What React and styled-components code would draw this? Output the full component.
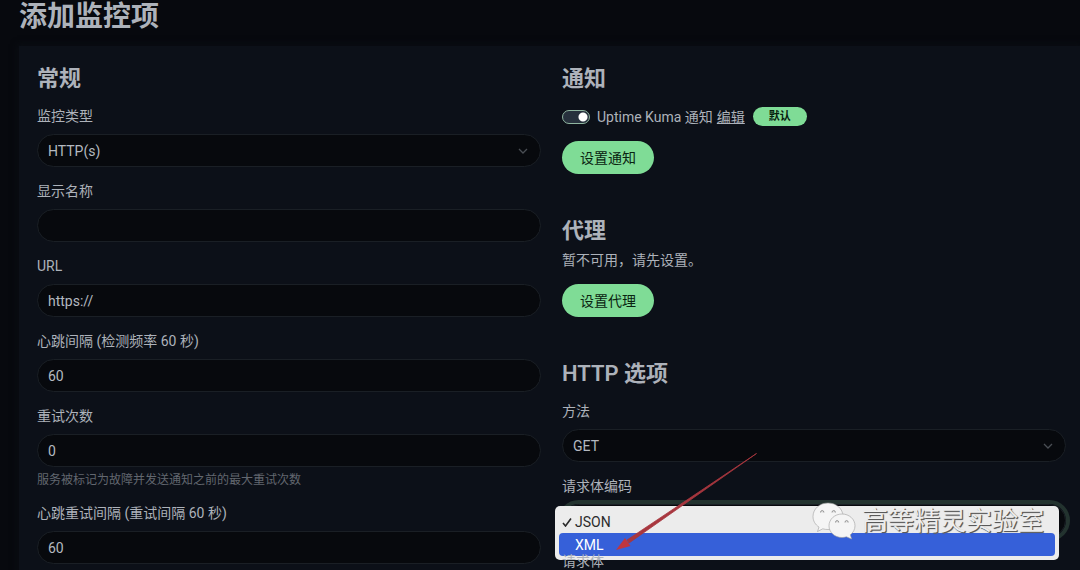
import React from "react";
import styled, { createGlobalStyle } from "styled-components";

const GlobalStyle = createGlobalStyle`
  * { box-sizing: border-box; }
  html { scrollbar-width: none; background: #07090e; }
  body {
    margin: 0;
    background: #07090e;
    color: #adb2ba;
    font-family: Roboto, "Noto Sans CJK SC", sans-serif;
    font-size: 14px;
    line-height: 20px;
  }
  input, select, button { font: inherit; }
`;

const Page = styled.main`
  min-height: 100vh;
  padding-left: 19px;
`;

const PageTitle = styled.h1`
  margin: 0 0 12px;
  font-size: 28px;
  line-height: 34px;
  font-weight: 600;
`;

const Card = styled.form`
  display: grid;
  grid-template-columns: 1fr 1fr;
  gap: 21px;
  padding: 18px 14px 18px 18px;
  background: #0c1018;
  box-shadow: 0 0 6px 2px #0a0d13;
`;

const Column = styled.div`
  min-width: 0;
`;

const Section = styled.section`
  margin-bottom: 42px;
`;

const SectionTitle = styled.h2`
  margin: 0 0 ${(p) => (p.$tight ? 4 : 12)}px;
  font-size: 22px;
  line-height: 30px;
  font-weight: 600;
`;

const Field = styled.div`
  position: relative;
  margin-bottom: 14px;
`;

const Label = styled.label`
  display: block;
  margin-bottom: 8px;
`;

const Input = styled.input`
  display: block;
  width: 100%;
  height: 33px;
  padding: 0 10px;
  border: 1px solid #1a1f25;
  border-radius: 17px;
  background: #07090d;
  color: #b4b9c0;
  outline: none;
`;

const SelectWrap = styled.div`
  display: grid;
  align-items: center;
  border-radius: 17px;
  box-shadow: ${(p) => (p.$focused ? "0 0 0 4px #23332f" : "none")};
  > * { grid-area: 1 / 1; }
`;

const Select = styled(Input).attrs({ as: "select" })`
  appearance: none;
`;

const Chevron = styled.svg`
  justify-self: end;
  margin-right: 12px;
  pointer-events: none;
`;

const Help = styled.p`
  margin: 5px 0 0;
  font-size: 12px;
  line-height: 17px;
  color: #62676f;
`;

const Note = styled.p`
  margin: 0 0 14px;
`;

const ToggleRow = styled.div`
  display: flex;
  align-items: center;
  height: 21px;
  margin-bottom: 14px;
`;

const Toggle = styled.input`
  appearance: none;
  width: 28px;
  height: 14px;
  margin: 0 7px 0 0;
  border: 1px solid #8fb5a0;
  border-radius: 7px;
  background: radial-gradient(circle at 20px 6px, #fff 4px, #27313d 5px);
`;

const EditLink = styled.a`
  margin: 0 8px 0 4px;
  color: inherit;
  text-decoration: underline;
`;

const Badge = styled.span`
  padding: 1px 16px 0;
  border-radius: 10px;
  background: #7fdc96;
  color: #06200d;
  font-size: 11px;
  line-height: 18px;
  font-weight: 700;
`;

const PillButton = styled.button`
  height: 33px;
  padding: 0 18px;
  border: 0;
  border-radius: 17px;
  background: #7fdc96;
  color: #0a2411;
`;

const Menu = styled.div`
  position: absolute;
  top: 30px;
  left: -7px;
  right: 7px;
  padding: 4px;
  border-radius: 5px;
  background: #ececec;
`;

const MenuItem = styled.button`
  display: flex;
  align-items: center;
  width: 100%;
  height: 23px;
  padding: 0 3px;
  border: 0;
  border-radius: 4px;
  background: ${(p) => (p.$active ? "#3660d9" : "transparent")};
  color: ${(p) => (p.$active ? "#fff" : "#2b2b2b")};
`;

const CheckSlot = styled.span`
  display: flex;
  width: 13px;
`;

const Pointer = styled.svg`
  position: absolute;
  top: -24px;
  left: 50px;
  pointer-events: none;
`;

const Watermark = styled.div`
  position: absolute;
  top: 24px;
  right: 22px;
  display: flex;
  align-items: center;
  gap: 6px;
  color: #ededed;
  font-size: 26px;
  line-height: 42px;
  text-shadow: 1px 1px 1px #555, 1px 1px 0 #777;
  pointer-events: none;
`;

const Arrow = () => (
  <Chevron width="12" height="8" viewBox="0 0 12 8" fill="none" stroke="#4a4e54" strokeWidth="1.3" aria-hidden="true">
    <path d="M2 2l4 4 4-4" />
  </Chevron>
);

function TextField({ id, label, value, help }) {
  return (
    <Field>
      <Label htmlFor={id}>{label}</Label>
      <Input id={id} defaultValue={value} />
      {help && <Help>{help}</Help>}
    </Field>
  );
}

function SelectField({ id, label, options, focused, children }) {
  return (
    <Field>
      <Label htmlFor={id}>{label}</Label>
      <SelectWrap $focused={focused}>
        <Select id={id}>
          {options.map((o) => (
            <option key={o}>{o}</option>
          ))}
        </Select>
        <Arrow />
      </SelectWrap>
      {children}
    </Field>
  );
}

const WeChat = () => (
  <svg width="44" height="38" viewBox="0 0 44 38" aria-hidden="true">
    <g fill="#f5f5f5" stroke="#9d9d9d" strokeWidth="0.6">
      <path d="M16 1C7.500 1 1 7 1 14.500c0 4.400 2.300 8.200 6 10.600L5.500 29.500l5.300-2.700c1.600.5 3.400.7 5.200.7 8.300 0 15-5.900 15-13.300S24.300 1 16 1z" />
      <path d="M30 12c-7.200 0-13 5.200-13 11.800s5.800 11.700 13 11.700c1.500 0 3-.2 4.400-.7l5.200 2.200-1.300-4.200c2.900-2.200 4.700-5.400 4.700-9C43 17.200 37.200 12 30 12z" />
    </g>
    <g fill="#e0e0e0" stroke="#858585" strokeWidth="0.8">
      <path d="M8.500 10.500a1.700 2 0 0 1 3.400 0M20 10.500a1.700 2 0 0 1 3.400 0M23.500 20.500a1.600 2 0 0 1 3.200 0M33 20.500a1.600 2 0 0 1 3.200 0" />
    </g>
  </svg>
);

export default function App() {
  return (
    <>
      <GlobalStyle />
      <Page>
        <PageTitle>添加监控项</PageTitle>
        <Card>
          <Column>
            <SectionTitle>常规</SectionTitle>
            <SelectField id="type" label="监控类型" options={["HTTP(s)"]} />
            <TextField id="name" label="显示名称" value="" />
            <TextField id="url" label="URL" value="https://" />
            <TextField id="interval" label="心跳间隔 (检测频率 60 秒)" value="60" />
            <TextField id="retries" label="重试次数" value="0" help="服务被标记为故障并发送通知之前的最大重试次数" />
            <TextField id="retry-interval" label="心跳重试间隔 (重试间隔 60 秒)" value="60" />
          </Column>
          <Column>
            <Section>
              <SectionTitle>通知</SectionTitle>
              <ToggleRow>
                <Toggle type="checkbox" id="notify" defaultChecked />
                <label htmlFor="notify">Uptime Kuma 通知</label>
                <EditLink href="#edit">编辑</EditLink>
                <Badge>默认</Badge>
              </ToggleRow>
              <PillButton type="button">设置通知</PillButton>
            </Section>
            <Section>
              <SectionTitle $tight>代理</SectionTitle>
              <Note>暂不可用，请先设置。</Note>
              <PillButton type="button">设置代理</PillButton>
            </Section>
            <SectionTitle>HTTP 选项</SectionTitle>
            <SelectField id="method" label="方法" options={["GET"]} />
            <SelectField id="encoding" label="请求体编码" options={["JSON", "XML"]} focused>
              <Menu role="listbox" aria-label="请求体编码">
                <MenuItem type="button" role="option" aria-selected="true">
                  <CheckSlot>
                    <svg width="10" height="10" viewBox="0 0 10 10" fill="none" stroke="#2b2b2b" strokeWidth="1.6" aria-hidden="true">
                      <path d="M1 6l2.500 3L9 1.500" />
                    </svg>
                  </CheckSlot>
                  JSON
                </MenuItem>
                <MenuItem type="button" role="option" aria-selected="false" $active>
                  <CheckSlot />
                  XML
                </MenuItem>
              </Menu>
              <Pointer width="150" height="104" viewBox="0 0 150 104" aria-hidden="true">
                <path d="M144.500 1.500L17 91l-2-3z" fill="#a8373f" stroke="#a8373f" strokeWidth="0.800" />
                <path d="M4 98l9-12 5.500 8z" fill="#c0363f" />
              </Pointer>
              <Watermark>
                <WeChat />
                <span>高等精灵实验室</span>
              </Watermark>
            </SelectField>
            <TextField id="body" label="请求体" value="" />
          </Column>
        </Card>
      </Page>
    </>
  );
}
